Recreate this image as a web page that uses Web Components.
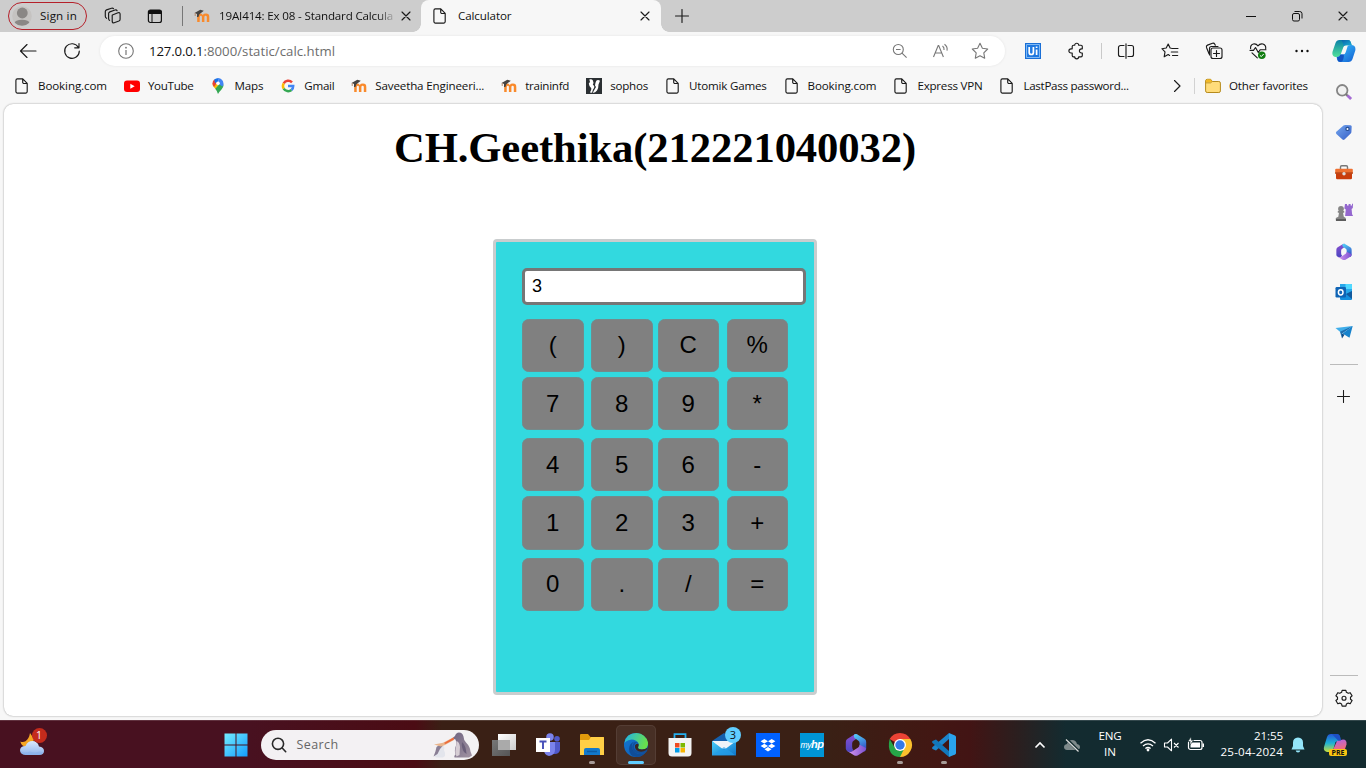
<!DOCTYPE html>
<html lang="en"><head><meta charset="utf-8"><title>Calculator</title>
<style>html,body{margin:0;height:100%;overflow:hidden}</style></head><body>
<desk-top></desk-top>
<script>
const L=(id,a,b,v='x2="1" y2="1"')=>`<linearGradient id="${id}" ${v}><stop stop-color="${a}"/><stop offset="1" stop-color="${b}"/></linearGradient>`;
const stroke='fill="none" stroke="#1b1b1b" stroke-width="1.15" stroke-linecap="round" stroke-linejoin="round"';
// name: [width, height, markup]
const ICONS={
page:[16,16,`<path ${stroke} d="M3.4.9h5.4l4.4 4.4v8.3a1.5 1.5 0 0 1-1.5 1.5H3.4a1.5 1.5 0 0 1-1.5-1.5V2.4A1.5 1.5 0 0 1 3.4.9zM8.7 1v3.2a1.3 1.3 0 0 0 1.3 1.3h3.1"/>`],
avatar:[22,22,`<defs><clipPath id="c"><circle cx="11" cy="11" r="9.8"/></clipPath></defs><circle cx="11" cy="11" r="9.8" fill="#c5c3c1"/><g clip-path="url(#c)" fill="#8a8785"><circle cx="11.3" cy="8" r="5.4"/><ellipse cx="11" cy="18.5" rx="7.8" ry="3.8"/></g>`],
spaces:[18,18,`<g ${stroke}><path d="M8.4 8 14 5.8q1.9-.6 2.1 1.2v5.2q0 1.3-1.2 1.8l-4.7 1.8q-1.9.6-2-1.4V8.6q0-.4.2-.6z"/><path d="M5.6 13.4Q4.6 13 4.6 11.500V6.600q0-1.200 1.200-1.700L11 3q1.500-.5 2.100.7"/><path d="M2.600 11.300Q1.300 10.700 1.300 9.300V4.600q0-1.200 1.200-1.700L7.500 1.200q1.300-.4 2 .5"/></g>`],
tabs:[16,16,`<rect x="1.400" y="2" width="13" height="12.500" rx="2" fill="none" stroke="#111" stroke-width="1.200"/><path d="M1.500 6V3.500Q1.500 2 3.300 2H13q1.500 0 1.500 1.500V6z" fill="#111"/><path d="M5 6v8" stroke="#111"/>`],
moodle:[16,16,`<path d="M3.200 14V8.500Q3.200 5.600 6 5.600q2 0 2.700 1.300Q9.600 5.600 12 5.600q3.300 0 3.300 3.300V14h-2.500V9q0-1.300-1.200-1.300T10.400 9v5H7.900V9q0-1.300-1-1.300T5.700 9v5z" fill="#f98a2c"/><path d="m.5 5 5.800-3.300 3.500 1-4.400 3.600-1 2.600H3V6z" fill="#474442"/><path d="M1.200 5v3" stroke="#b78f70"/>`],
x:[10,10,`<path d="m1 1 8 8m0-8-8 8" ${stroke}/>`],
plus:[14,14,`<path d="M7 .5v13M.5 7h13" ${stroke}/>`],
min:[12,12,`<path d="M1 6.500h10" stroke="#111"/>`],
restore:[12,12,`<g fill="none" stroke="#111"><rect x="1.500" y="3.500" width="7" height="7.500" rx="1.500"/><path d="M3.500 1.500h5.200Q11 1.500 11 3.700V8.500"/></g>`],
back:[18,16,`<path ${stroke} d="M17 8H1.500M8 1.500 1.500 8 8 14.500"/>`],
reload:[18,18,`<path ${stroke} d="M15.400 5.500A7.300 7.300 0 1 0 16.300 9M16 1.500v4.300h-4.300"/>`],
info:[16,16,`<circle cx="8" cy="8" r="7.300" fill="none" stroke="#767676" stroke-width="1.100"/><path d="M8 7v5" stroke="#767676" stroke-width="1.200"/><circle cx="8" cy="4.700" r=".9" fill="#767676"/>`],
zoomout:[16,16,`<g fill="none" stroke="#777" stroke-width="1.100"><circle cx="6.300" cy="6.500" r="5"/><path d="m10 10.200 4.600 4.500M4 6.500h4.600"/></g>`],
read:[18,16,`<g fill="none" stroke="#777" stroke-width="1.100"><path d="M1.500 14 6.200 2.500h.5L11.400 14M3.100 10h6.700M10.500 3q2 1.500 1.500 4M12.500 1.300q3.300 2.500 2.500 6.300"/></g>`],
star:[18,18,`<path d="m9 1.300 2.400 4.900 5.300.8-3.900 3.800.9 5.400L9 13.700l-4.700 2.500.9-5.400L1.300 7l5.300-.8z" fill="none" stroke="#777" stroke-width="1.100" stroke-linejoin="round"/>`],
ui:[16,16,`<path d="M0 0h16v16H0z" fill="#1a6fd6"/><path d="M1.500 1.500h13v13h-13z" fill="#1f78e0" stroke="#9bcbfa" stroke-width=".8"/><path d="M4.200 4v5.500q0 2 2.100 2t2.100-2V4M11.600 6.500V12M11.600 3.500v1.600" stroke="#fff" stroke-width="1.700" fill="none"/>`],
puzzle:[18,18,`<path ${stroke} d="M6.500 3.200h1.200a2 2 0 0 1 4 0h2.300q1.300 0 1.300 1.300v2.300h-.8a2.100 2.100 0 0 0 0 4.200h.8v2.500q0 1.300-1.300 1.300h-2.300a2 2 0 0 1-4 0H6.500q-1.300 0-1.300-1.300V11H4a2.100 2.100 0 0 1 0-4.200h1.200V4.500q0-1.300 1.300-1.300z"/>`],
split:[18,16,`<path ${stroke} d="M7 2.500H3.500a2 2 0 0 0-2 2v7a2 2 0 0 0 2 2H7M11 2.500h3.500a2 2 0 0 1 2 2v7a2 2 0 0 1-2 2H11M9 .8v14.500"/>`],
favs:[18,18,`<path ${stroke} d="M10.200 6.200 9.100 6 7.200 2 5.200 6l-4.300.7L4 9.800l-.8 5 4-2.200 1.400.8M11 6.500h6M10.300 10h6.400M11.500 13.500h5.200"/>`],
coll:[18,18,`<g ${stroke}><path d="M4 11.700 1.500 5.500q-.6-1.700 1-2.400l5-1.900q1.500-.5 2.300 1l.5 1M4.500 13V6.500q0-2 2-2H13"/><rect x="6" y="6" width="11" height="10.500" rx="2"/><path d="M11.500 8.500v6M8.500 11.500h6"/></g>`],
heart:[18,18,`<path ${stroke} d="M1.600 6.500Q1.200 3 4.300 2 7 1.300 9 3.800 11 1.300 14 2q3.200 1.200 2.700 4.700M1 8.300h3.500l2-2.800L9.300 10.500l2-2.800H17M3 10.800l5.300 5"/><circle cx="12.800" cy="13.300" r="3.800" fill="#107c10"/><path d="m10.900 13.300 1.400 1.300 2.400-2.600" stroke="#fff" fill="none"/>`],
dots:[16,6,`<g fill="#111"><circle cx="2.500" cy="3" r="1.200"/><circle cx="8" cy="3" r="1.200"/><circle cx="13.500" cy="3" r="1.200"/></g>`],
copilot:[24,24,`<defs>${L('a','#0a7fa8','#52e29a','x2="0" y2="1"')}${L('b','#3cc6ff','#125ed2')}${L('d','#0b5fa8','#1ab4d8')}</defs><path d="M7.500 1h8.500q2 0 2.700 2l1 3.200H14q-2 0-2.700 2L8.500 16q-.8 2-3.300 2Q-.8 18 .6 12.500L3.500 4Q4.500 1 7.500 1z" fill="url(#a)"/><path d="M9 1h7q2 0 2.700 2l1 3.200H14q-1.500 0-2.300 1L10.500 3Q10 1 9 1z" fill="url(#d)"/><path d="M16.500 23H8q-2 0-2.700-2l-.8-3q3 .2 4-2.500h2.500q2 0 2.700-2.200l2-6.300Q16.500 6 19 6q5.200 0 4.300 5.500L20.500 20q-1 3-4 3z" fill="url(#b)"/><path d="M5 18q2.700 0 3.500-2.500h3.200q.5 1.500-.2 4-.8 3.500-3 3.500-2.500 0-3-2z" fill="#1154c4"/>`],
yt:[16,16,`<rect y="2.500" width="16" height="11.500" rx="3" fill="#f00"/><path d="m6.300 5.700 4.400 2.500-4.400 2.500z" fill="#fff"/>`],
maps:[16,16,`<path d="M8 16q-.8-3-3-5.500L11.500 4q2 1.500 2 3.200 0 2-2 4.300Q9 14 8 16z" fill="#34a853"/><path d="M3.800 9Q2.500 7.500 2.500 5.500L6 4.200l2.500 2.600-3.200 4z" fill="#fbbc04"/><path d="M2.500 5.500Q2.500 3 4.200 1.500L7.500 4 4 9Q2.500 7 2.500 5.500z" fill="#ea4335"/><path d="M4.200 1.500Q6 0 8.500 0L8 4 5 5z" fill="#1a73e8"/><path d="M8 0q5 .5 5.500 5.500 0 2-1 3L8.500 6z" fill="#4285f4"/><circle cx="8" cy="5.300" r="1.800" fill="#fff"/>`],
google:[16,16,`<g fill="none" stroke-width="2.500"><path d="M12 4.300A5.200 5.200 0 0 0 3.700 5.300" stroke="#ea4335"/><path d="M3.700 5.300a5.200 5.200 0 0 0 0 5.300" stroke="#fbbc05"/><path d="M3.700 10.600A5.200 5.200 0 0 0 11.500 12" stroke="#34a853"/><path d="M11.500 12q1.700-1.500 1.700-3.900H8" stroke="#4285f4"/></g>`],
sophos:[16,16,`<path d="M0 0h16v16H0z" fill="#2b3033"/><path d="M3.300 1.500q2.500-.8 3.600 1Q8 4.500 6.800 6.500l1.500 1.700Q8.500 10 7 11.500l-1 3.200-2-.2q1.600-2 1.300-4.200Q3 8.500 2.800 5.500L4 4z" fill="#fff"/><path d="M9 7.500Q9.500 3 11 2.300q1.500-.6 3 .5l-1.500 3.700q0 4-1.500 6-1.500 2-4.300 2.500L8 12.500 10 9z" fill="#fff"/>`],
chev:[10,14,`<path ${stroke} d="M2.500 1.500 8 7l-5.500 5.500"/>`],
folder:[16,16,`<path d="M.6 4V3Q.6 1.300 2.300 1.300h3.400L7.300 3.500h6.500q1.600 0 1.600 1.600v7.800q0 1.600-1.600 1.600H2.200q-1.600 0-1.600-1.600z" fill="#ffdc7a" stroke="#b58a1c"/><path d="M1 4.500h4.600l1.700-1L5.700 1.500H2.200Q1 1.500 1 3z" fill="#f2b824"/><path d="M.8 4.900h4.700l1.800-1.400" fill="none" stroke="#b58a1c" stroke-width=".8"/>`],
search:[18,18,`<circle cx="7.200" cy="7.300" r="5.300" fill="#f1f1f1" stroke="#858585" stroke-width="1.800"/><path d="m10.800 11 2 2" stroke="#777" stroke-width="2"/><path d="m12.500 12.500 3.600 3.600" stroke="#a56bd3" stroke-width="2.800"/>`],
tag:[18,18,`<defs>${L('a','#75a7ee','#355fc8')}</defs><path d="M1.300 8.800 8.500 2.500q.8-.7 2-.6l5 .4q1.200.1 1.200 1.300l-.3 5.300q0 .8-.7 1.500L9.500 16.500q-1 .9-2 0L1.400 11q-1-1.200-.1-2.200z" fill="url(#a)"/><circle cx="12.500" cy="5.900" r="1.600" fill="#fff" stroke="#254e95" stroke-width="1.200"/>`],
tool:[18,18,`<path d="M5.500 6.500V4q0-1.200 1.200-1.200h4.600q1.200 0 1.200 1.200v2.500" fill="none" stroke="#777" stroke-width="1.400"/><rect y="5.700" x=".2" width="17.600" height="5.300" rx="1" fill="#ef7030"/><path d="M1 10.500h16V15q0 1.200-1.200 1.200H2.200Q1 16.200 1 15z" fill="#c93d0c"/><path d="M0 10h18" stroke="#9e3611"/><circle cx="9" cy="10.800" r="1.700" fill="#ddd"/>`],
games:[18,18,`<path d="M10 1h2v1.600h1.600V1h2v1.600H17V.8l1-.1-.2 4.400-1.200.8.5 5.400 1 1.700h-8l.7-6.500-1.500-1z" fill="#9467cf"/><g fill="#858585"><circle cx="6" cy="5.800" r="2.900"/><path d="M2.800 8h6.400v1.700H8l.8 4 2 1.300v2.600H.8V15L3.300 13.700 4 9.700H2.800z"/></g><path d="M1 16h10v2H1z" fill="#5c5c5c"/>`],
m365:[20,20,`<defs>${L('a','#8a4fd0','#4a45c0','x2="0" y2="1"')}${L('b','#54d6fa','#3453c8','x2=".3" y2="1"')}${L('d','#d99af0','#7c50d0','x2="1" y2="0"')}</defs><path d="M11 .8 9 1 3 4.700Q1.500 5.500 1.500 7.500V13q0 1.500 1.500 2.400 2 1.200 3.500.3L8 14.300Q6.800 13.500 6.800 11.500V8.700q0-1.500 1.200-2.200L11.500 4z" fill="url(#a)"/><path d="M8.500 1.200q1.500-.7 3 .2L17 4.700q1.500.8 1.500 2.800V13q0 1.500-1.500 2.500l-4-2.500V8.500q0-1.300-1-2L10 5Q7.500 4 8.500 1.200z" fill="url(#b)"/><path d="M18.300 12.500q.2 2-1.300 2.800l-5.300 3.200q-1.700 1-3.400 0L3 15.300q2.500 1 4.300-.3l4.500-3q1.200-.8 1.200-2.300z" fill="url(#d)"/>`],
outlook:[18,18,`<path d="M5 1h11q1 0 1 1v13H5z" fill="#28a8ea"/><path d="M10.500 1H16q1 0 1 1v4h-6.500z" fill="#50d9ff"/><path d="m5 14 12-6v8q0 1-1 1H6q-1 0-1-1z" fill="#1490df"/><path d="M11 11 17 8v8z" fill="#125a9d"/><rect x=".5" y="4" width="10.500" height="10.500" rx="1.200" fill="#0f64b5"/><ellipse cx="5.700" cy="9.300" rx="2.300" ry="2.600" fill="none" stroke="#fff" stroke-width="1.500"/>`],
plane:[18,18,`<path d="M.5 5 17.700 3 7 10.500z" fill="#40aeea"/><path d="m5 8.700 12.700-5.700L7 10.500v5z" fill="#1d6daf"/><path d="M17.700 3 14.500 14.800 7.500 10.500z" fill="#1682cc"/><path d="m7 10.500 2.500 1.300L7 15.500z" fill="#104a83"/>`],
gear:[18,18,`<path ${stroke} d="m7.100 1.300-.5 2-1.800 1-2-.6-1.900 3.200L2.500 8.300v1.900L.9 11.500l1.900 3.200 2-.6 1.800 1 .5 2h3.800l.5-2 1.800-1 2 .6 1.900-3.200-1.600-1.300V8.300l1.600-1.400-1.900-3.200-2 .6-1.800-1-.5-2z"/><circle cx="9" cy="9.200" r="2" ${stroke}/>`],
weather:[26,26,`<defs>${L('a','#dbe9fc','#8db4ed','x2="0" y2="1"')}</defs><path d="M11 3q-1 6-4.500 8.200Q4 12.700 1.300 11.500 2.500 16 7 17q7-1 8-8z" fill="#f5a623"/><path d="M6.500 25Q1 24.500 1 20 1.500 16 6.500 16q2-5 7-5t6.500 5.500q5 .5 5 4.500T20 25z" fill="url(#a)"/><path d="M2 21.500q4 2 9 0 5 2 9 0 3 0 4 1-1 2.500-4 2.500H7q-4 0-5-3.500z" fill="#86aee9" opacity=".5"/>`],
win:[24,24,`<defs>${L('a','#74edff','#139cff')}</defs><path d="M.5.500h11v11H.5zM12.500.500h11v11h-11zM.5 12.500h11v11H.5zM12.500 12.500h11v11h-11z" fill="url(#a)"/>`],
mag:[16,16,`<g fill="none" stroke="#292929" stroke-width="1.600" stroke-linecap="round"><circle cx="7" cy="6.800" r="5.600"/><path d="m11.200 11 3.500 3.700"/></g>`],
penguins:[42,28,`<defs>${L('a','#6f6380','#a294a3')}</defs><path d="M20 7.500 23 5q1-3.500 4-3.500 3.500 0 4.500 4 0 3 2.500 6 4 4 4.500 9l1.500 4-3 2H22.500q-1-1.500 1-3-1.500-4 .5-9 1-3.500-.5-6z" fill="url(#a)"/><path d="M24.500 10q3 1 3.500 6l-.5 8-3 1.500q-2-5-.5-9.500z" fill="#d6cdd4"/><path d="M30 11q4 3.500 4.500 12l-2.500-2q-3-5-2-10z" fill="#6b5f7a"/><path d="M5 16q2.500-3 6-1.500 2 1.500 1 4.500 1.500 3 1 6l-2 1.500H4l-2-1.500 3-4z" fill="#e3e5ec"/><path d="M4.500 16q3-3 6.500-1.500l-3 3.500-2.500 5-4 2.500q2-4 3-9.500z" fill="#8a7f95"/><path d="m2 13.500 9-1.800L21 6.500l1 2.500-9 5-4 1.500z" fill="#eab58c"/><path d="m12 12 9.500-5.500.5 2-8.500 4.500z" fill="#ee6a3a"/>`],
task:[26,26,`<defs>${L('a','#fff','#ccc')}${L('b','#777','#555')}</defs><path d="M7 2h18v16H7z" fill="url(#a)"/><path d="M1 8h18v16H1z" fill="url(#b)"/><path d="M7 8h12v10H7z" fill="#aaa"/>`],
teams:[26,26,`<circle cx="22" cy="6.800" r="2.800" fill="#5059c9"/><circle cx="15" cy="5" r="3.800" fill="#7b83eb"/><path d="M17 10h8v8q-1 4-5 4h-3z" fill="#5059c9"/><path d="M9 10h11v8q0 5-6 6-5-1-5-6z" fill="#7b83eb"/><path d="M1 6h14v14H1z" fill="#fff"/><path d="M4.500 9.500h7M8 9.500V17" stroke="#464eb8" stroke-width="1.900"/>`],
explorer:[26,26,`<path d="M1 3q0-1 1-1h7l2.500 3H25v16H1z" fill="#e29b0c"/><path d="M1 8h9l2-3h12q1 0 1 1v17H1z" fill="#ffcf46"/><path d="M5 23v-5q0-2 2-2h12q2 0 2 2v5z" fill="#1279cc"/><path d="M8 19.500h10" stroke="#0c5ca5" stroke-width="1.500"/>`],
edge:[26,26,`<defs>${L('a','#1fb2ec','#68e04c','x2="1" y2=".3"')}${L('b','#1577d1','#0a5cb4')}</defs><circle cx="13" cy="13" r="12" fill="url(#b)"/><path d="M1.500 11Q3 1 13.500 1q9 .5 11.500 9.500.7 6.500-6 7-4 0-4-2.200 1.500-2 .5-4Q12.500 7 7.500 7.700 3 8.500 1.500 11z" fill="url(#a)"/><path d="M12 9.500Q8 11 9 16q1.800 6 8.500 6 2.500 0 5-1.500Q19 25 13.500 25 6 24 6 17q0-6 6-7.500z" fill="#104d98"/><path d="M16 12q-2-2.500-4 0-2 3 0 5.500 3.500 3 10 1 2-1 2.500-.5-1 3-3.500 3.500-7 1.500-10.500-2Q7.500 15 11 10.500q3-1.500 5 1.500z" fill="#12509b"/><path d="M15.500 12q-2.500-1-3.500 1.500-.5 3.500 3 5.500 4 1.700 8.500-1l1.200-2.500Q22.500 17.500 19 17.500q-4 0-4-2.200.9-1.300.5-3.300z" fill="#3b2720"/>`],
store:[26,26,`<path d="M7.500 6V2.200h11V6" fill="none" stroke="#24b0f0" stroke-width="1.800"/><path d="M1.500 6h23v15q0 3.500-3.500 3.500H5Q1.500 24.500 1.500 21z" fill="#f3f3f3"/><path d="M8 11h4.500v4.500H8z" fill="#f04a20"/><path d="M13.500 11H18v4.500h-4.500z" fill="#7cb900"/><path d="M8 16h4.500v4.500H8z" fill="#009ce8"/><path d="M13.500 16H18v4.500h-4.500z" fill="#f8b500"/>`],
mail:[26,26,`<defs>${L('a','#48cffc','#0d73c8')}</defs><path d="M1 9 13 1l12 8v14H1z" fill="#1560ad"/><path d="M1 9h24l-7 8H8z" fill="#eef3f8"/><path d="m1 9 12 9 12-9v14.500H1z" fill="url(#a)"/><path d="m2 23 11-8 11 8z" fill="#249ee8" opacity=".7"/>`],
dropbox:[26,26,`<path d="M1 1h24v24H1z" fill="#0061ff"/><path d="m9.300 7 3.700 2.300-3.700 2.300-3.700-2.300zM16.700 7l3.700 2.300-3.700 2.300L13 9.300zM9.300 11.700 13 14l-3.700 2.300L5.600 14zM16.700 11.700l3.700 2.300-3.700 2.300L13 14zM13 15l3.500 2.200L13 19.400l-3.500-2.200z" fill="#fff"/>`],
chrome:[26,26,`<path d="M13 13 2.600 7A12 12 0 0 1 23.400 7z" fill="#ea4335"/><path d="M13 13V25A12 12 0 0 0 23.400 7H13z" fill="#fbc02d"/><path d="M2.600 7 8 16l3.500 2.500L17.500 16 13 25Q7 25 4 21 .5 16 2.600 7z" fill="#26a648"/><circle cx="13" cy="13" r="6" fill="#fff"/><circle cx="13" cy="13" r="4.700" fill="#3279e8"/>`],
code:[26,26,`<path d="m18 1 6 2.500q1 .5 1 1.500v16q0 1-1 1.500L18 25z" fill="#2aa3ec"/><path d="M18 1v6L5 18.500l-3.500-1.500q-1-1 0-2z" fill="#1c85cc"/><path d="M18 25v-6L5 7.500 1.500 9q-1 1 0 2z" fill="#1277bb"/>`],
up:[12,12,`<path d="m1.500 8.500 4.500-4.500 4.500 4.500" fill="none" stroke="#fff" stroke-width="1.600"/>`],
cloud:[18,16,`<path d="M4 13q-3-.5-3-3t3-3q1-4 5-4t5 4q3 .5 3 3t-3 3z" fill="#7e898a"/><path d="m3 1.500 13 13" stroke="#132b2e" stroke-width="3"/><path d="m3 2.500 12.500 12" stroke="#ddd" stroke-width="1.200"/>`],
wifi:[18,16,`<g fill="none" stroke="#fff" stroke-width="1.300"><path d="M1.500 6.300q7.500-7 15 0M4 9.100q5-4.500 10 0M6.400 11.600q2.600-2.200 5.200 0"/></g><circle cx="9" cy="13" r="1.400" fill="#fff"/>`],
vol:[18,16,`<path d="M1.500 6h3l4-3.800v11.600L4.500 10h-3zM11 6l4.500 4.500m0-4.500L11 10.500" fill="none" stroke="#fff" stroke-width="1.100" stroke-linejoin="round"/>`],
bat:[18,16,`<rect x="1.500" y="3.500" width="13.500" height="9" rx="2" fill="none" stroke="#fff" stroke-width="1.200"/><path d="M3.500 5.500H13v5H3.500zM15.500 6.500H17V10h-1.500z" fill="#fff"/><path d="M4-.2 1 4.500h2.200l-.7 4L6.500 3.300H4.300z" fill="#fff" stroke="#132b2e" stroke-width=".6"/>`],
bell:[14,16,`<path d="M7 .5q5 .5 5 5V9l1.500 3.500H.5L2 9V5.500Q2 1 7 .5zM4.700 13.500h4.600Q9 15.500 7 15.500t-2.300-2z" fill="#94e6fa"/>`],
pre:[26,26,`<defs><linearGradient id="a" x2="0" y2="1"><stop stop-color="#2455d6"/><stop offset=".5" stop-color="#1cb0d6"/><stop offset="1" stop-color="#c9df3a"/></linearGradient>${L('b','#aa62ee','#fb6d6c','x2=".3" y2="1"')}</defs><path d="M8 2h6q2.500 0 3 2.500l.5 3.500-5 2-3 10H4q-4-1-3-5L4 5q1-3 4-3z" fill="url(#a)"/><path d="m14 9 6-1.500q4 0 3.500 5L21 20H9z" fill="url(#b)"/><path d="M9 2h5q2.500 0 3 2.500l1 4h-3z" fill="#1d4fc4"/>`]
};
const def=(n,html,fn)=>customElements.define(n,class extends HTMLElement{
  constructor(){super();this.attachShadow({mode:'open'})}
  connectedCallback(){this.shadowRoot.innerHTML=typeof html==='function'?html(this):html;fn&&fn(this)}
});
const A=(e,n,d='')=>e.getAttribute(n)??d;

def('desk-top',`<style>:host{display:flex;flex-direction:column;width:1366px;height:768px;overflow:hidden;background:#f7f7f7;font-family:"Open Sans","Noto Sans",sans-serif;font-size:11.600px;color:#111}
.body{display:flex;flex:1;min-height:0}.col{display:flex;flex-direction:column;width:1323px}</style>
<title-bar></title-bar><div class="body"><div class="col"><tool-bar></tool-bar><favorites-bar></favorites-bar><page-view></page-view></div><side-bar></side-bar></div><task-bar></task-bar>`);

def('title-bar',`<style>:host{display:flex;height:32px;align-items:center;background:#cdcdcd}t-x{padding-bottom:2px}
.pill{box-sizing:border-box;margin-left:8px;width:79px;height:28px;border:1px solid #b5202a;border-radius:14px;display:flex;align-items:center;gap:7px;padding-left:2px}
.vr{width:1px;height:20px;background:#777;margin-left:19px}.fade{margin-left:9px;width:174px;-webkit-mask:linear-gradient(90deg,#000 158px,#0003 174px)}
.tab{height:32px;width:240px;margin-left:10px;background:#f7f7f7;border-radius:8px 8px 0 0;display:flex;align-items:center;position:relative}
.tab:before,.tab:after{content:"";position:absolute;bottom:0;width:8px;height:8px;background:radial-gradient(circle at 0 0,transparent 7.500px,#f7f7f7 8px)}.tab:before{left:-8px}.tab:after{right:-8px;transform:scaleX(-1)}
</style><div class="pill"><i-c n="avatar"></i-c><t-x w="37">Sign in</t-x></div>
<i-c n="spaces" style="margin-left:17px"></i-c><i-c n="tabs" style="margin-left:25px"></i-c><span class="vr"></span><i-c n="moodle" style="margin-left:11px"></i-c>
<div class="fade"><t-x w="174">19AI414: Ex 08 - Standard Calcula</t-x></div><i-c n="x" style="margin-left:8px"></i-c>
<div class="tab"><i-c n="page" style="margin-left:11px"></i-c><t-x w="53.500" style="margin-left:10px">Calculator</t-x><i-c n="x" style="margin-left:128.500px"></i-c></div>
<i-c n="plus" style="margin-left:14px"></i-c><i-c n="min" style="margin-left:555.500px"></i-c><i-c n="restore" style="margin-left:34px"></i-c><i-c n="x" style="margin-left:35px"></i-c>`);

def('tool-bar',`<style>:host{display:flex;height:38px;align-items:center}
.addr{display:flex;align-items:center;width:905px;height:30px;border-radius:15px;background:#fff;margin-left:19px;box-shadow:0 0 3px #00000014;color:#6d6d6d}
.vr{width:1px;height:16px;background:#c9c9c9;margin-left:15px}</style>
<i-c n="back" style="margin-left:19px"></i-c><i-c n="reload" style="margin-left:26px"></i-c>
<div class="addr"><i-c n="info" style="margin-left:18px"></i-c><t-x w="54.500" style="margin-left:15px;font-size:13.200px;color:#111">127.0.0.1</t-x><t-x w="131.500" style="font-size:13.200px">:8000/static/calc.html</t-x>
<i-c n="zoomout" style="margin-left:557px"></i-c><i-c n="read" style="margin-left:24px"></i-c><i-c n="star" style="margin-left:21px"></i-c></div>
<i-c n="ui" style="margin-left:20px"></i-c><i-c n="puzzle" style="margin-left:26px"></i-c><span class="vr" style="margin-left:16px"></span><i-c n="split" style="margin-left:15px"></i-c><i-c n="favs" style="margin-left:26px"></i-c><i-c n="coll" style="margin-left:26px"></i-c><i-c n="heart" style="margin-left:26px"></i-c><i-c n="dots" style="margin-left:27px"></i-c>`);

def('fav-item',e=>`<style>:host{display:flex;align-items:center;gap:8px}t-x{padding-bottom:2px}</style><i-c n="${A(e,'icon')}"></i-c><t-x w="${A(e,'w')}"><slot></slot></t-x>`);
def('favorites-bar',`<style>:host{display:flex;height:32px;align-items:center;padding-left:14px}.list{display:flex;gap:16.950px}.vr{width:1px;height:16px;background:#d2d2d2;margin:0 9.500px 0 12.500px}</style>
<div class="list"><fav-item icon="page" w="69">Booking.com</fav-item><fav-item icon="yt" w="45.500">YouTube</fav-item><fav-item icon="maps" w="29">Maps</fav-item><fav-item icon="google" w="30">Gmail</fav-item><fav-item icon="moodle" w="109">Saveetha Engineeri...</fav-item><fav-item icon="moodle" w="44">traininfd</fav-item><fav-item icon="sophos" w="38">sophos</fav-item><fav-item icon="page" w="77.500">Utomik Games</fav-item><fav-item icon="page" w="69">Booking.com</fav-item><fav-item icon="page" w="65">Express VPN</fav-item><fav-item icon="page" w="105.500">LastPass password...</fav-item></div>
<i-c n="chev" style="margin-left:43px"></i-c><span class="vr"></span><fav-item icon="folder" w="79">Other favorites</fav-item>`);

def('page-view',`<style>:host{display:flex;flex-direction:column;align-items:center;box-sizing:border-box;margin:2px 1px 4px 4px;flex:1;min-height:0;background:#fff;border-radius:9px;box-shadow:0 0 2px #0006;padding-right:16px}
h1{margin:20px 0 67px;font:bold 42.670px/48px "Liberation Serif",serif;color:#000}</style>
<h1><t-x w="522">CH.Geethika(212221040032)</t-x></h1><calc-pad></calc-pad>`);

def('calc-key',`<style>:host{display:flex;box-sizing:border-box;width:61.500px;height:53.300px;align-items:center;justify-content:center;background:gray;border:1px solid #748a8b;border-radius:6.500px;font:24px "Liberation Sans",sans-serif;color:#000}</style><slot></slot>`);
def('calc-pad',`<style>:host{display:block;box-sizing:border-box;width:324px;height:455.500px;border:3px solid #c9cdce;border-radius:4px;background:#32d9df;padding:26px 0 0 26px}
.out{box-sizing:border-box;width:284px;height:37px;border:3px solid #767676;border-radius:5px;background:#fff;font:18px/31px "Liberation Sans",sans-serif;padding-left:7px;color:#000}
.keys{display:grid;grid-template-columns:69px 66.500px 69px 61.500px;grid-template-rows:58.300px 61.200px 58.300px 61.200px 53px;margin-top:13.600px}</style>
<div class="out">3</div><div class="keys">${[...'()C%789*456-123+0./='].map(k=>`<calc-key>${k}</calc-key>`).join('')}</div>`);

def('side-bar',`<style>:host{display:flex;flex-direction:column;align-items:center;width:42px;height:688px}.i{display:flex;height:40px;align-items:center;justify-content:center}hr{width:28px;height:1px;border:0;background:#bbb;margin:0}.gap{flex:1}</style>
<div class="i"><i-c n="copilot" style="margin-top:-2px"></i-c></div>${['search','tag','tool','games','m365','outlook','plane'].map(n=>`<div class="i"><i-c n="${n}" w="18"></i-c></div>`).join('')}
<hr style="margin-top:12px"><i-c n="plus" w="13" style="margin:25px 1px 0 0"></i-c><span class="gap"></span><hr><i-c n="gear" style="margin:13px 0 13px"></i-c>`);

def('app-slot',e=>`<style>:host{display:flex;position:relative;width:44px;height:48px;align-items:center;justify-content:center}.hl{display:flex;width:38px;height:38px;align-items:center;justify-content:center;border:1px solid transparent;border-radius:5px}
:host([active]) .hl{background:#ffffff12;border-color:#ffffff12}:host([run]):after,:host([active]):after{content:"";position:absolute;bottom:5px;left:19px;width:6px;height:3px;border-radius:2px;background:#a79b97}:host([active]):after{left:14px;width:16px;background:#60cdff}
::slotted(.badge){position:absolute;left:23px;top:6px;width:16px;height:16px;border-radius:50%;background:#60cdff;color:#111;text-align:center;font-size:11px;line-height:16px}</style><div class="hl"><i-c n="${A(e,'icon')}" w="${A(e,'w',26)}"></i-c></div><slot></slot>`);
def('hp-tile',`<style>:host{display:flex;width:24px;height:24px;align-items:center;justify-content:center;background:#0096d6;color:#fff;font:italic 8.500px/24px "Liberation Sans",sans-serif;white-space:nowrap}b{font-size:11px}span{letter-spacing:-.5px}</style><span>my<b>hp</b></span>`);
def('task-bar',`<style>:host{display:flex;box-sizing:border-box;height:48px;align-items:center;color:#fff;border-top:1px solid #ffffff24;background:linear-gradient(90deg,#481120 0,#481120 250px,#4b0c14 415px,#3a2015 442px,#3a2015 830px,#421713 935px,#421414 970px,#2c1e1e 1015px,#132b30 1066px,#132b2f)}
.w{position:relative;margin-left:19px;width:26px}.w i-c{margin-top:-4px}.r{position:absolute;left:12.500px;top:-6px;width:15px;height:15px;border-radius:50%;background:#c42b1c;color:#fff;font-size:10.500px;line-height:15px;text-align:center}
.s{display:flex;align-items:center;width:218px;height:30px;background:#f3f1f3;border-radius:15px;margin:0 3px 0 13.500px;color:#666}.apps{display:flex}.hp{display:flex;width:44px;align-items:center;justify-content:center}
.lang{width:40px;margin-left:9px}.clock{width:63px;margin-left:15px}.lang,.clock{display:flex;flex-direction:column;line-height:16px;padding-bottom:1px}.lang{align-items:center}.clock{align-items:flex-end}
.p{position:relative;display:flex;margin-left:18px}.p span{position:absolute;left:6px;top:17px;width:18px;height:7px;border-radius:2px;background:#fbc512;color:#111;font-size:7px;font-weight:700;line-height:7px;text-align:center}</style>
<div class="w"><i-c n="weather"></i-c><span class="r">1</span></div><i-c n="win" style="margin-left:178.500px"></i-c>
<div class="s"><i-c n="mag" style="margin-left:10px"></i-c><t-x w="42" style="margin-left:9.500px;font-size:12.500px">Search</t-x><i-c n="penguins" style="margin-left:93px"></i-c></div>
<div class="apps"><app-slot icon="task"></app-slot><app-slot icon="teams"></app-slot><app-slot icon="explorer" run></app-slot><app-slot icon="edge" active></app-slot><app-slot icon="store"></app-slot><app-slot icon="mail"><span class="badge">3</span></app-slot><app-slot icon="dropbox"></app-slot><div class="hp"><hp-tile></hp-tile></div><app-slot icon="m365" w="24"></app-slot><app-slot icon="chrome" run></app-slot><app-slot icon="code" run></app-slot></div>
<i-c n="up" style="margin-left:68px"></i-c><i-c n="cloud" style="margin-left:17px"></i-c><div class="lang"><t-x w="23">ENG</t-x><t-x w="12">IN</t-x></div>
<i-c n="wifi" style="margin-left:9px"></i-c><i-c n="vol" style="margin-left:6px"></i-c><i-c n="bat" style="margin-left:6px"></i-c><div class="clock"><t-x w="29">21:55</t-x><t-x w="62.500">25-04-2024</t-x></div><i-c n="bell" style="margin-left:8px"></i-c>
<div class="p"><i-c n="pre"></i-c><span>PRE</span></div>`);

def('i-c',e=>{const [w,h,s]=ICONS[A(e,'n')],W=+A(e,'w',w);return `<style>:host{display:block;flex:none;width:${W}px;height:${W*h/w}px}svg{display:block;width:100%;height:100%}</style><svg viewBox="0 0 ${w} ${h}">${s}</svg>`});
// Text label that spreads its tracking to occupy the width given in "w".
def('t-x',e=>`<style>:host{display:block;flex:none;width:${A(e,'w')}px;white-space:nowrap}span{display:inline-block}</style><span><slot></slot></span>`,e=>{
  const sp=e.shadowRoot.querySelector('span'),n=e.shadowRoot.querySelector('slot').assignedNodes({flatten:true}).map(x=>x.textContent).join('').length;
  sp.style.letterSpacing=(+A(e,'w')-sp.getBoundingClientRect().width)/n+'px';
});
</script></body></html>
